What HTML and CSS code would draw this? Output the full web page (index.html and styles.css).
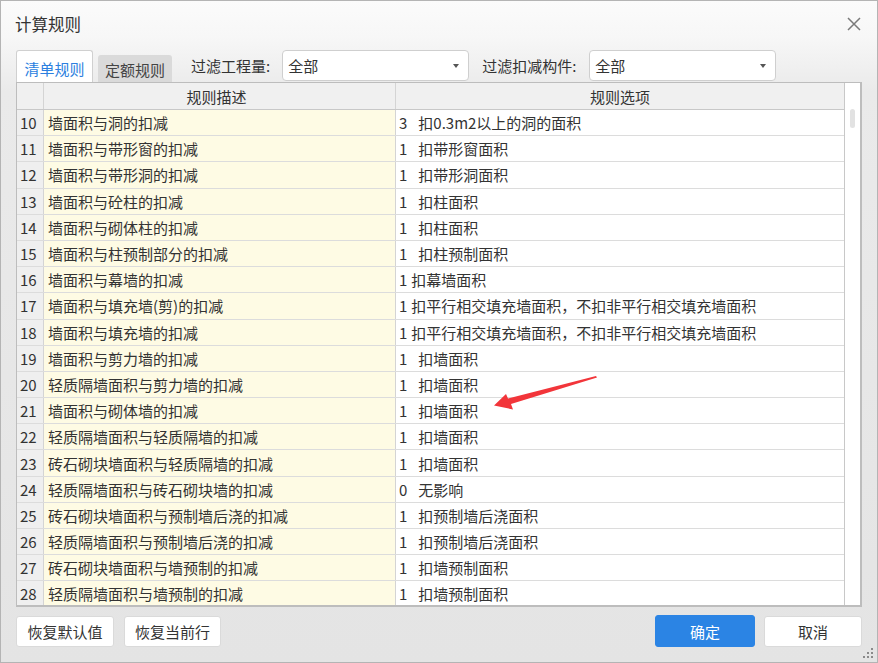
FILE: index.html
```html
<!DOCTYPE html>
<html lang="zh">
<head>
<meta charset="utf-8">
<title>计算规则</title>
<link rel="stylesheet" href="styles.css">
</head>
<body>
<div class="dialog">
  <div class="titlebar">
    <span class="title">计算规则</span>
    <svg class="close" width="16" height="16" viewBox="0 0 16 16"><path d="M2 2L14 14M14 2L2 14" stroke="#7a7a7a" stroke-width="1.5" fill="none"/></svg>
  </div>
  <div class="toolbar">
    <div class="tab active">清单规则</div>
    <div class="tab">定额规则</div>
    <span class="label first">过滤工程量:</span>
    <div class="select"><span>全部</span><i class="caret"></i></div>
    <span class="label second">过滤扣减构件:</span>
    <div class="select"><span>全部</span><i class="caret"></i></div>
  </div>
  <div class="table">
    <div class="grid">
      <div class="row head"><div class="c num"></div><div class="c desc">规则描述</div><div class="c opt">规则选项</div></div>
      <div class="row"><div class="c num">10</div><div class="c desc">墙面积与洞的扣减</div><div class="c opt"><span class="v w">3</span>扣0.3m2以上的洞的面积</div></div>
      <div class="row"><div class="c num">11</div><div class="c desc">墙面积与带形窗的扣减</div><div class="c opt"><span class="v w">1</span>扣带形窗面积</div></div>
      <div class="row"><div class="c num">12</div><div class="c desc">墙面积与带形洞的扣减</div><div class="c opt"><span class="v w">1</span>扣带形洞面积</div></div>
      <div class="row"><div class="c num">13</div><div class="c desc">墙面积与砼柱的扣减</div><div class="c opt"><span class="v w">1</span>扣柱面积</div></div>
      <div class="row"><div class="c num">14</div><div class="c desc">墙面积与砌体柱的扣减</div><div class="c opt"><span class="v w">1</span>扣柱面积</div></div>
      <div class="row"><div class="c num">15</div><div class="c desc">墙面积与柱预制部分的扣减</div><div class="c opt"><span class="v w">1</span>扣柱预制面积</div></div>
      <div class="row"><div class="c num">16</div><div class="c desc">墙面积与幕墙的扣减</div><div class="c opt"><span class="v">1</span>扣幕墙面积</div></div>
      <div class="row"><div class="c num">17</div><div class="c desc">墙面积与填充墙(剪)的扣减</div><div class="c opt"><span class="v">1</span>扣平行相交填充墙面积，不扣非平行相交填充墙面积</div></div>
      <div class="row"><div class="c num">18</div><div class="c desc">墙面积与填充墙的扣减</div><div class="c opt"><span class="v">1</span>扣平行相交填充墙面积，不扣非平行相交填充墙面积</div></div>
      <div class="row"><div class="c num">19</div><div class="c desc">墙面积与剪力墙的扣减</div><div class="c opt"><span class="v w">1</span>扣墙面积</div></div>
      <div class="row"><div class="c num">20</div><div class="c desc">轻质隔墙面积与剪力墙的扣减</div><div class="c opt"><span class="v w">1</span>扣墙面积</div></div>
      <div class="row"><div class="c num">21</div><div class="c desc">墙面积与砌体墙的扣减</div><div class="c opt"><span class="v w">1</span>扣墙面积</div></div>
      <div class="row"><div class="c num">22</div><div class="c desc">轻质隔墙面积与轻质隔墙的扣减</div><div class="c opt"><span class="v w">1</span>扣墙面积</div></div>
      <div class="row"><div class="c num">23</div><div class="c desc">砖石砌块墙面积与轻质隔墙的扣减</div><div class="c opt"><span class="v w">1</span>扣墙面积</div></div>
      <div class="row"><div class="c num">24</div><div class="c desc">轻质隔墙面积与砖石砌块墙的扣减</div><div class="c opt"><span class="v w">0</span>无影响</div></div>
      <div class="row"><div class="c num">25</div><div class="c desc">砖石砌块墙面积与预制墙后浇的扣减</div><div class="c opt"><span class="v w">1</span>扣预制墙后浇面积</div></div>
      <div class="row"><div class="c num">26</div><div class="c desc">轻质隔墙面积与预制墙后浇的扣减</div><div class="c opt"><span class="v w">1</span>扣预制墙后浇面积</div></div>
      <div class="row"><div class="c num">27</div><div class="c desc">砖石砌块墙面积与墙预制的扣减</div><div class="c opt"><span class="v w">1</span>扣墙预制面积</div></div>
      <div class="row"><div class="c num">28</div><div class="c desc">轻质隔墙面积与墙预制的扣减</div><div class="c opt"><span class="v w">1</span>扣墙预制面积</div></div>
    </div>
    <div class="scroll"><div class="thumb"></div></div>
  </div>
  <div class="footer">
    <div class="btn b1">恢复默认值</div>
    <div class="btn b2">恢复当前行</div>
    <div class="spacer"></div>
    <div class="btn primary">确定</div>
    <div class="btn b4">取消</div>
  </div>
  <svg class="grip" width="12" height="12" viewBox="0 0 12 12" fill="#8a8a8a"><rect x="9" y="1" width="2" height="2"/><rect x="5" y="5" width="2" height="2"/><rect x="9" y="5" width="2" height="2"/><rect x="1" y="9" width="2" height="2"/><rect x="5" y="9" width="2" height="2"/><rect x="9" y="9" width="2" height="2"/></svg>
  <svg class="arrow" width="130" height="50" viewBox="0 0 130 50"><polygon points="13,39.5 25,28 27,32.5 115,10 116,11.5 30,38 32,43.5" fill="#f2353a"/></svg>
</div>
</body>
</html>
```

FILE: styles.css
```css
* { box-sizing: border-box; }
html, body { margin: 0; padding: 0; }
body {
  font-family: "Microsoft YaHei", "Noto Sans CJK SC", "Noto Sans", sans-serif;
  font-size: 15px;
  color: #333;
  background: #fff;
}
.dialog {
  position: relative;
  width: 878px;
  height: 663px;
  border: 1px solid #b4b4b4;
  background: linear-gradient(to bottom, #fbfbfb 0px, #f7f7f7 36px, #eaeaea 90px, #e4e4e4 100%);
  display: flex;
  flex-direction: column;
}
.titlebar {
  height: 49px;
  display: flex;
  align-items: center;
  justify-content: space-between;
  padding: 0 15px 4px 14px;
}
.title { font-size: 16.5px; color: #333; }
.toolbar {
  display: flex;
  align-items: flex-start;
  height: 32px;
  margin: 0 15px;
}
.tab {
  height: 32px;
  width: 77px;
  background: #fff;
  border: 1px solid #d0d0d0;
  border-bottom: none;
  border-radius: 3px 3px 0 0;
  color: #2c7fe0;
  display: flex;
  align-items: center;
  justify-content: center;
  padding-top: 3px;
}
.tab:not(.active) {
  width: 74px;
  height: 27px;
  margin-top: 5px;
  margin-left: 5px;
  background: #dadada;
  border: none;
  color: #444;
  padding-top: 2px;
}
.label {
  height: 30px;
  display: flex;
  align-items: center;
  color: #333;
}
.label.first { margin-left: 19px; margin-right: 12px; }
.label.second { margin-left: 13px; margin-right: 13px; }
.select {
  width: 187px;
  height: 31px;
  background: #fff;
  border: 1px solid #cfcfcf;
  border-radius: 4px;
  display: flex;
  align-items: center;
  justify-content: space-between;
  padding: 0 9px 0 5px;
}
.caret {
  width: 0; height: 0;
  border-left: 3.5px solid transparent;
  border-right: 3.5px solid transparent;
  border-top: 4px solid #555;
}
.table {
  margin: 0 15px;
  height: 525px;
  border: 1px solid #bdbdbd;
  border-right-width: 2px;
  border-bottom-width: 2px;
  background: #fff;
  display: flex;
  overflow: hidden;
}
.grid { flex: 1; overflow: hidden; }
.row {
  display: flex;
  height: 26.2px;
  border-bottom: 1px solid #dcdcdc;
}
.row.head { height: 27px; border-bottom: 1px solid #c8c8c8; background: #f0f0f0; }
.c {
  display: flex;
  align-items: center;
  white-space: nowrap;
  overflow: hidden;
}
.num {
  width: 27px;
  background: #efefef;
  border-right: 1px solid #d4d4d4;
  padding-left: 3px;
  color: #333;
}
.desc {
  width: 352px;
  background: #fefbe4;
  border-right: 1px solid #d4d4d4;
  padding-left: 4px;
}
.opt { flex: 1; padding-left: 3px; }
.v { margin-right: 4px; }
.v.w { margin-right: 11px; }
.head .c { background: #f0f0f0; justify-content: center; padding-left: 0; }
.head .desc { padding-right: 6px; }
.scroll {
  width: 16px;
  border-left: 1px solid #c8c8c8;
  background: #fff;
  padding-top: 26px;
  padding-left: 5px;
}
.thumb {
  width: 5px;
  height: 19px;
  background: #e2e2e2;
  border-radius: 3px;
}
.footer {
  display: flex;
  align-items: center;
  padding: 8px 15px 0 15px;
}
.btn {
  height: 31px;
  background: #fff;
  border: 1px solid #dadada;
  border-radius: 3px;
  display: flex;
  align-items: center;
  justify-content: center;
  color: #333;
}
.b1 { width: 98px; margin-right: 10px; }
.b2 { width: 97px; }
.spacer { flex: 1; }
.btn.primary {
  width: 100px;
  height: 32px;
  background: #2b84e4;
  border-color: #2b84e4;
  color: #fff;
  margin-right: 9px;
}
.b4 { width: 98px; }
.grip { position: absolute; right: 3px; bottom: 3px; }
.arrow { position: absolute; left: 480px; top: 365px; }
```
